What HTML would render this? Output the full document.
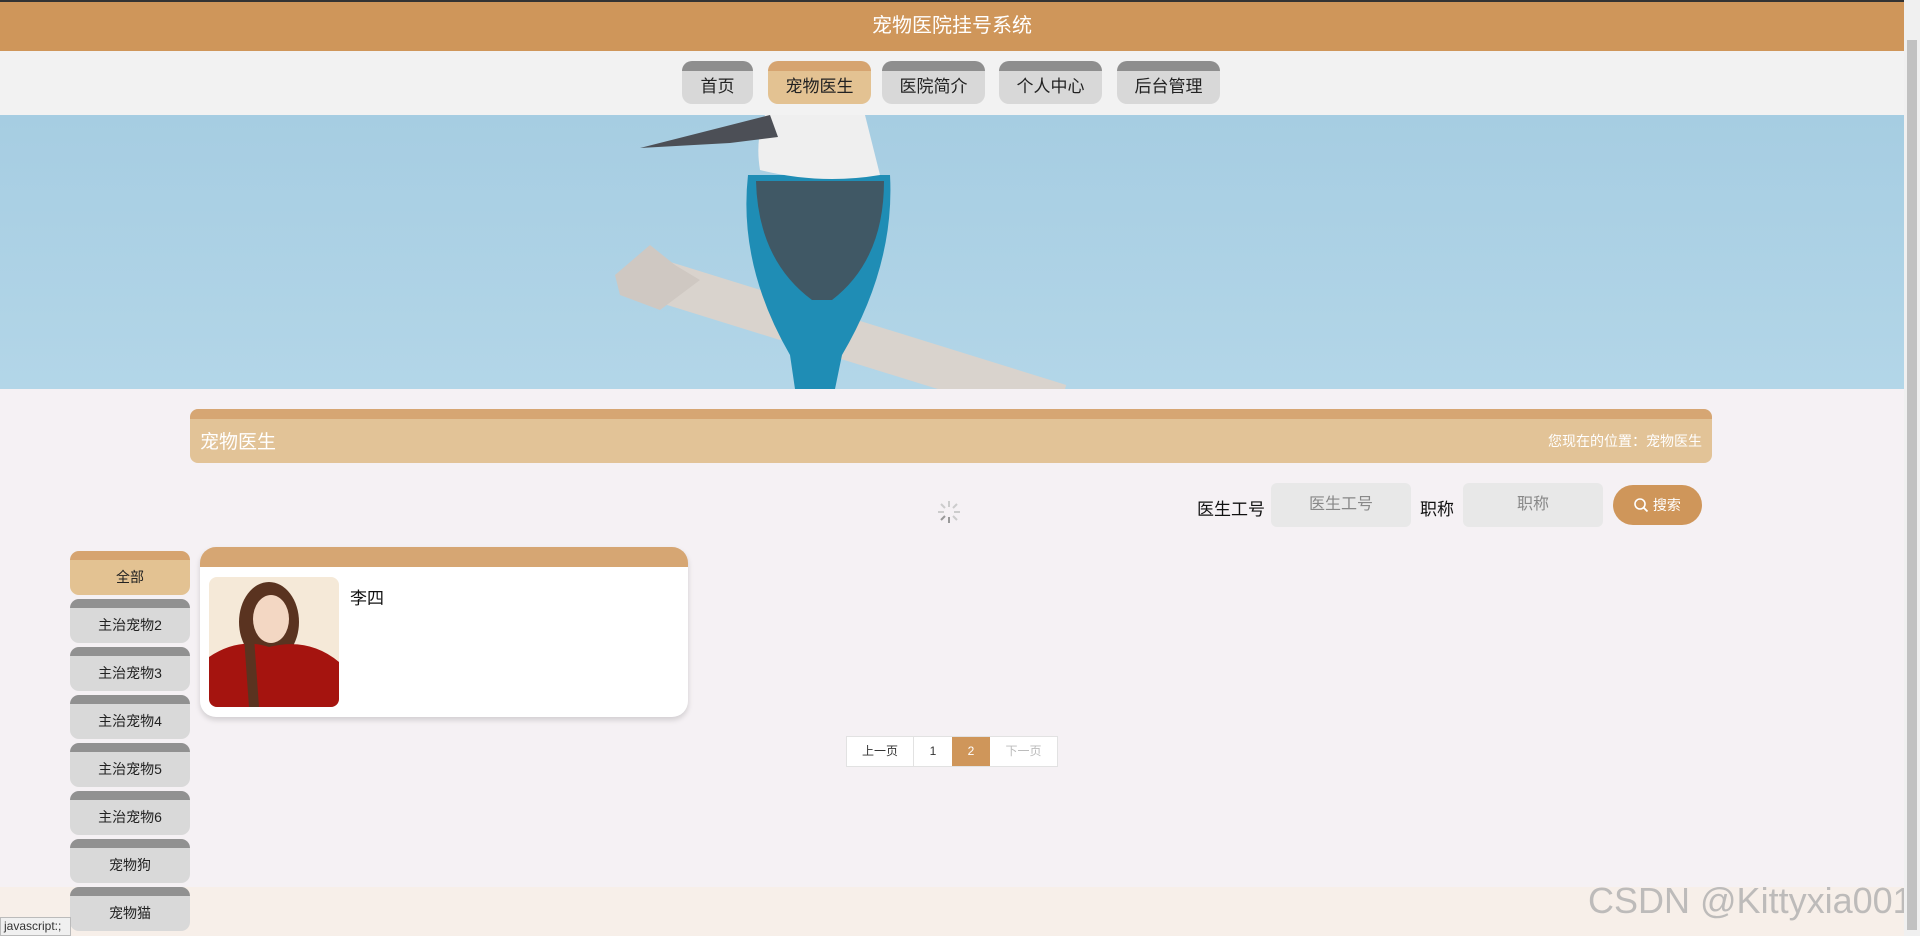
<!DOCTYPE html>
<html><head><meta charset="utf-8"><style>
*{margin:0;padding:0;box-sizing:border-box}
html{overflow:hidden;width:1920px;height:936px}
body{width:1920px;height:936px;overflow:hidden;background:#f5f1f4;font-family:"Liberation Sans","Noto Sans CJK SC",sans-serif;position:relative}
.abs{position:absolute}
.top{left:0;top:0;width:1904px;height:51px;background:#cf965a;border-top:2px solid #333;color:#fff;font-size:20px;text-align:center;line-height:48px}
.nav{left:0;top:51px;width:1904px;height:64px;background:#f2f2f2}
.btn{position:absolute;top:61px;height:43px;border-radius:10px;background:#d8d8d8;border-top:10px solid #8e8e8e;font-size:17px;color:#222;text-align:center;line-height:32px}
.btn.on{background:#e3c292;border-top-color:#d6a470}
.cat{position:absolute;left:70px;width:120px;height:44px;border-radius:9px;background:#d9d9d9;border-top:9px solid #919191;font-size:14px;color:#222;text-align:center;line-height:34px}
.cat.on{background:#e3c292;border-top-color:#d6a470}
.sb{right:0;top:0;width:16px;height:936px;background:#f0f0f0}
</style></head><body>
<div class="abs top">宠物医院挂号系统</div>
<div class="abs nav"></div>
<div class="btn" style="left:682px;width:71px">首页</div>
<div class="btn on" style="left:768px;width:103px">宠物医生</div>
<div class="btn" style="left:882px;width:103px">医院简介</div>
<div class="btn" style="left:999px;width:103px">个人中心</div>
<div class="btn" style="left:1117px;width:103px">后台管理</div>
<svg class="abs" style="left:0;top:115px" width="1904" height="274">
<defs><linearGradient id="sk" x1="0" y1="0" x2="0" y2="1"><stop offset="0" stop-color="#a6cde2"/><stop offset="1" stop-color="#b3d6e8"/></linearGradient></defs>
<rect width="1904" height="274" fill="url(#sk)"/>
<line x1="635" y1="158" x2="1060" y2="290" stroke="#d9d3cd" stroke-width="42"/>
<polygon points="615,160 650,130 675,150 700,165 660,195 620,180" fill="#cfc8c2"/>
<path d="M748,60 Q738,150 790,240 L795,274 L835,274 L842,240 Q895,150 890,60 Z" fill="#1f8db5"/>
<path d="M756,66 Q758,145 812,185 L832,185 Q884,145 884,66 Z" fill="#405865"/>
<path d="M765,0 L865,0 Q875,40 880,60 Q820,70 760,55 Q755,25 765,0Z" fill="#efefef"/>
<polygon points="640,33 770,0 778,22 730,28" fill="#4c4f56"/>
</svg>
<div class="abs" style="left:190px;top:409px;width:1522px;height:54px;border-radius:8px;background:#e2c397;border-top:10px solid #d6a673"></div>
<div class="abs" style="left:200px;top:427px;color:#fff;font-size:19px">宠物医生</div>
<div class="abs" style="right:218px;top:431px;color:#fff;font-size:14px">您现在的位置：宠物医生</div>
<div class="abs" style="left:1197px;top:495px;font-size:17px;color:#111">医生工号</div>
<div class="abs" style="left:1271px;top:483px;width:140px;height:44px;border-radius:6px;background:#e8e8e8;color:#888;font-size:16px;text-align:center;line-height:44px">医生工号</div>
<div class="abs" style="left:1420px;top:495px;font-size:17px;color:#111">职称</div>
<div class="abs" style="left:1463px;top:483px;width:140px;height:44px;border-radius:6px;background:#e8e8e8;color:#888;font-size:16px;text-align:center;line-height:44px">职称</div>
<div class="abs" style="left:1613px;top:485px;width:89px;height:40px;border-radius:20px;background:#cf965a;color:#fff;font-size:14px;line-height:40px;padding-left:20px"><svg width="16" height="16" style="vertical-align:-3px" viewBox="0 0 16 16"><circle cx="7" cy="7" r="5" fill="none" stroke="#fff" stroke-width="1.6"/><line x1="10.5" y1="10.5" x2="14.5" y2="14.5" stroke="#fff" stroke-width="1.8"/></svg> 搜索</div>
<svg class="abs" style="left:936px;top:499px" width="26" height="26" viewBox="0 0 26 26" stroke="#ccc" stroke-width="2"><line x1="13" y1="2" x2="13" y2="8"/><line x1="13" y1="18" x2="13" y2="24" stroke="#999"/><line x1="2" y1="13" x2="8" y2="13"/><line x1="18" y1="13" x2="24" y2="13"/><line x1="5" y1="5" x2="9" y2="9"/><line x1="17" y1="17" x2="21" y2="21"/><line x1="21" y1="5" x2="17" y2="9"/><line x1="5" y1="21" x2="9" y2="17" stroke="#999"/></svg>
<div class="cat on" style="top:551px">全部</div>
<div class="cat" style="top:599px">主治宠物2</div>
<div class="cat" style="top:647px">主治宠物3</div>
<div class="cat" style="top:695px">主治宠物4</div>
<div class="cat" style="top:743px">主治宠物5</div>
<div class="cat" style="top:791px">主治宠物6</div>
<div class="cat" style="top:839px">宠物狗</div>
<div class="cat" style="top:887px">宠物猫</div>
<div class="abs" style="left:200px;top:547px;width:488px;height:170px;border-radius:16px;background:#fff;border-top:20px solid #d6a673;box-shadow:0 3px 6px rgba(0,0,0,.15)"></div>
<svg class="abs" style="left:209px;top:577px" width="130" height="130"><defs><clipPath id="c"><rect width="130" height="130" rx="8"/></clipPath></defs><g clip-path="url(#c)"><rect width="130" height="130" fill="#f5e9d8"/><ellipse cx="60" cy="45" rx="30" ry="40" fill="#5a3320"/><ellipse cx="62" cy="42" rx="18" ry="24" fill="#f3d7c3"/><path d="M0 130 L0 80 Q30 60 60 70 Q100 60 130 85 L130 130Z" fill="#a5140f"/><path d="M35 60 L40 130 L50 130 L45 60Z" fill="#5a3320"/></g></svg>
<div class="abs" style="left:350px;top:584px;font-size:17px;color:#111">李四</div>
<div class="abs" style="left:846px;top:736px;height:31px;border:1px solid #e2e2e2;background:#fff;font-size:12px;display:flex">
<div style="width:67px;text-align:center;line-height:29px;color:#333;border-right:1px solid #e2e2e2">上一页</div>
<div style="width:38px;text-align:center;line-height:29px;color:#333">1</div>
<div style="width:38px;text-align:center;line-height:29px;color:#fff;background:#cf965a">2</div>
<div style="width:67px;text-align:center;line-height:29px;color:#bbb">下一页</div></div>
<div class="abs" style="left:0;top:887px;width:1904px;height:49px;background:#f7efe9;z-index:-1"></div>
<div class="abs" style="left:0;top:917px;width:71px;height:19px;background:#f0f0f0;border:1px solid #bbb;font-size:12px;color:#333;padding-left:3px;line-height:17px">javascript:;</div>
<div class="abs" style="left:1588px;top:880px;font-size:36px;white-space:nowrap;color:rgba(170,170,170,.75)">CSDN @Kittyxia001</div>
<div class="abs sb"><div style="position:absolute;left:3px;top:40px;width:10px;height:890px;background:#c1c1c1"></div></div>
</body></html>
